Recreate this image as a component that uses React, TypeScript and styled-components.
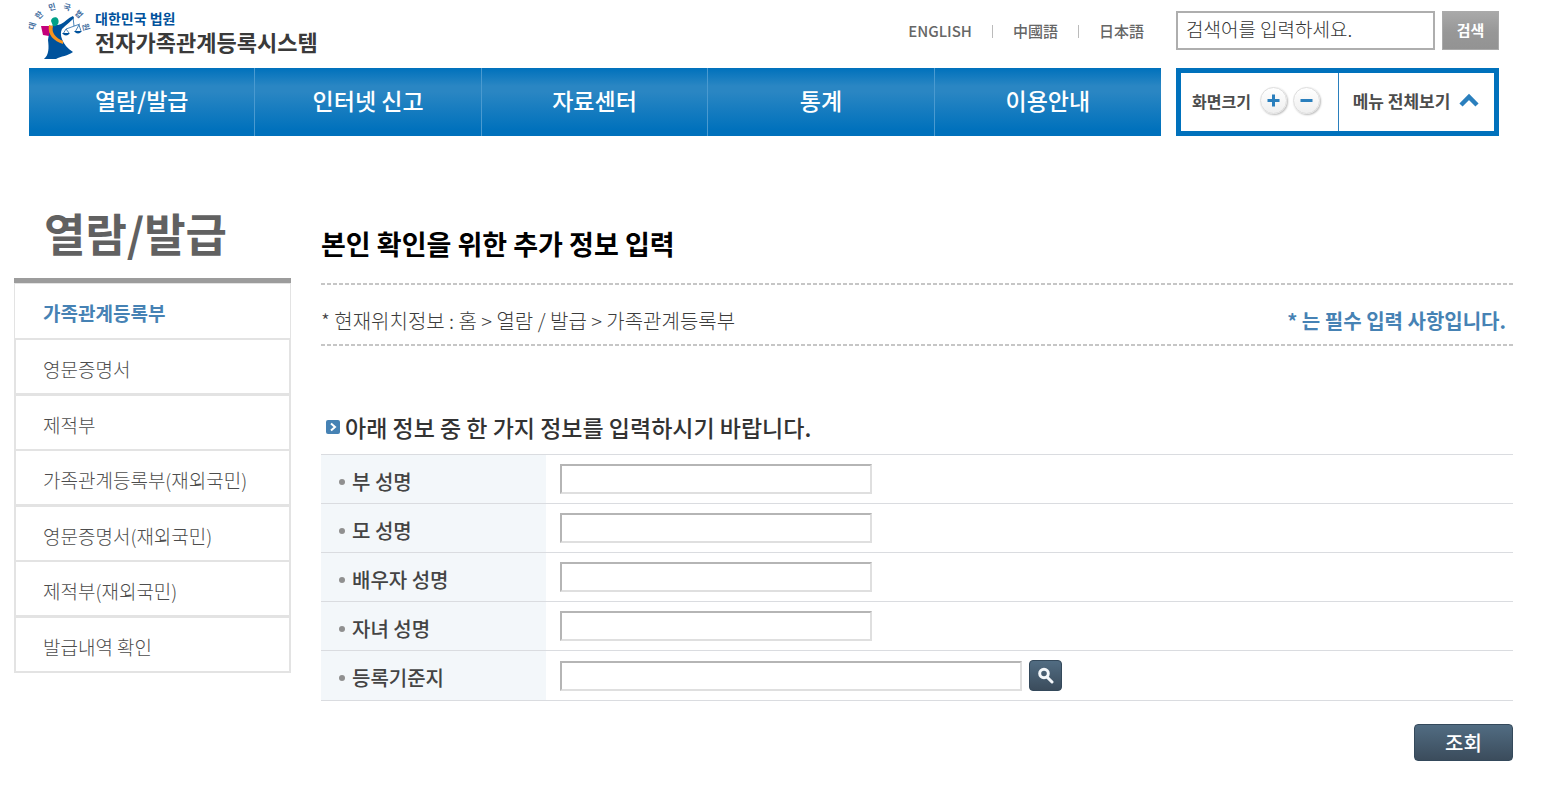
import React from 'react';
import styled, { createGlobalStyle } from 'styled-components';

const GlobalStyle = createGlobalStyle`
  *, *::before, *::after { box-sizing: border-box; }
  body {
    margin: 0;
    background: #fff;
    color: #444;
    font-family: "Noto Sans CJK KR", "Noto Sans", sans-serif;
  }
  h1, h2, h3, p, ul, ol { margin: 0; padding: 0; }
  ul, ol { list-style: none; }
  a { color: inherit; text-decoration: none; }
  button, input { font-family: inherit; margin: 0; }
  button { cursor: pointer; padding: 0; border: 0; }
`;

const Header = styled.header`
  padding: 0 42px 0 29px;
`;

const TopRow = styled.div`
  display: flex;
  align-items: flex-start;
  height: 68px;
`;

const Logo = styled.a`
  display: flex;
  gap: 3px;
  margin-left: -5px;
  margin-right: auto;
  white-space: nowrap;
`;

const LogoText = styled.span`
  display: flex;
  flex-direction: column;
  padding-top: 8px;
`;

const LogoSmall = styled.span`
  color: #00529c;
  font-size: 14px;
  font-weight: 700;
  line-height: 20px;
`;

const LogoName = styled.span`
  color: #3a3a3a;
  font-size: 22px;
  font-weight: 700;
  line-height: 26px;
`;

const Languages = styled.ul`
  display: flex;
  align-items: center;
  margin-right: 32px;
  padding-top: 21px;
  font-size: 15px;
  font-weight: 500;
  line-height: 20px;
  color: #666;

  li + li {
    display: flex;
    align-items: center;
  }
  li + li::before {
    content: "";
    width: 1px;
    height: 13px;
    margin: 0 20px;
    background: #bbb;
  }
`;

const SearchForm = styled.form`
  display: flex;
  gap: 7px;
  width: 323px;
  padding-top: 11px;
`;

const SearchInput = styled.input`
  flex: 1;
  min-width: 0;
  height: 39px;
  padding: 0 8px 4px;
  border: 2px solid #aeaeae;
  font-size: 19px;
  font-weight: 300;
  color: #333;
  &::placeholder { color: #333; opacity: 1; }
`;

const SearchButton = styled.button`
  width: 57px;
  height: 39px;
  padding-bottom: 3px;
  border: 1px solid #aaa;
  background: linear-gradient(#a9a9a9, #979797 55%, #939393);
  color: #fff;
  font-size: 15px;
  font-weight: 700;
`;

const NavRow = styled.div`
  display: flex;
  gap: 15px;
`;

const Nav = styled.nav`
  flex: 1;
  ul {
    display: grid;
    grid-template-columns: repeat(5, 1fr);
    background: linear-gradient(#0071bc 0, #2a86c3 18px, #2a86c3 24px, #0071bc 62px);
  }
  li { border-right: 1px solid #4a9ad0; }
  li:last-child { border-right: 0; }
  a {
    display: block;
    padding-bottom: 4px;
    line-height: 64px;
    text-align: center;
    color: #fff;
    font-size: 23px;
    font-weight: 500;
  }
`;

const Tools = styled.div`
  display: flex;
  width: 323px;
  border: 5px solid #0071bc;
  color: #4c4c4c;
  white-space: nowrap;
`;

const ScreenSize = styled.div`
  display: flex;
  align-items: center;
  width: 157px;
  padding: 0 0 3px 11px;
  box-shadow: 1px 0 0 #2a7fbd;
  font-size: 16px;
  font-weight: 700;
`;

const RoundButton = styled.button`
  width: 27px;
  height: 27px;
  border-radius: 50%;
  border: 1px solid #ddd;
  background: linear-gradient(#fff, #efefef);
  box-shadow: 1px 1px 2px #bbb;
  svg { display: block; margin: auto; }
  & + & { margin-left: 6px; }
`;

const SizeLabel = styled.span`
  flex: 1;
`;

const SizeButtons = styled.span`
  display: flex;
  padding-right: 18px;
`;

const AllMenu = styled.button`
  flex: 1;
  display: flex;
  align-items: center;
  justify-content: center;
  gap: 9px;
  padding-bottom: 4px;
  background: none;
  color: #4c4c4c;
  font-size: 17px;
  font-weight: 700;
`;

const Body = styled.div`
  display: flex;
  gap: 30px;
  padding: 64px 28px 24px 14px;
`;

const Side = styled.aside`
  flex: none;
  width: 277px;
`;

const SideTitle = styled.h2`
  height: 83px;
  padding-left: 30px;
  border-bottom: 5px solid #9c9c9c;
  color: #616161;
  font-size: 45px;
  font-weight: 700;
  line-height: 66px;
`;

const SideLink = styled.a<{ $current?: boolean }>`
  display: block;
  padding: 5px 0 0 27px;
  line-height: 48px;
  font-size: 19px;
  color: ${p => (p.$current ? '#4682b4' : '#4c4c4c')};
  font-weight: ${p => (p.$current ? 700 : 300)};
`;

const SideList = styled.ul`
  li {
    border: solid #e3e3e3;
    border-width: 2px 2px 0;
  }
  li:nth-child(odd) { border-top-width: 3px; }
  li:first-child {
    border-width: 1px 1px 0;
    padding: 0 1px 1px;
  }
  li:last-child { border-bottom-width: 2px; }
`;

const Main = styled.main`
  flex: 1;
  min-width: 0;
`;

const Title = styled.h1`
  height: 83px;
  padding-top: 26px;
  color: #000;
  font-size: 27px;
  font-weight: 700;
  line-height: 36px;
`;

const InfoBar = styled.div`
  background-image: repeating-linear-gradient(90deg, #c6c6c6 0 4px, transparent 4px 6px),
    repeating-linear-gradient(90deg, #c6c6c6 0 4px, transparent 4px 6px);
  background-repeat: no-repeat;
  background-size: 100% 2px;
  background-position: 0 0, 0 100%;
  display: flex;
  justify-content: space-between;
  height: 63px;
  padding: 24px 7px 0 0;
  font-size: 20px;
  line-height: 28px;
`;

const Crumbs = styled.p`
  color: #3c3c3c;
  font-weight: 300;
`;

const Required = styled.p`
  color: #4682b4;
  font-weight: 700;
`;

const SectionTitle = styled.h3`
  display: flex;
  align-items: center;
  gap: 5px;
  padding: 64px 0 10px 5px;
  color: #333;
  font-size: 23px;
  font-weight: 500;
  line-height: 34px;
  svg { flex: none; }
`;

const FormTable = styled.table`
  width: 100%;
  border-collapse: collapse;
  table-layout: fixed;
  tr { border-top: 1px solid #dadce0; }
  tr:last-child { border-bottom: 1px solid #dadce0; }
  tr:last-child td { height: 50px; }
  th {
    width: 225px;
    padding: 5px 0 0 18px;
    background: #f3f7fa;
    text-align: left;
    font-size: 20px;
    font-weight: 500;
    line-height: 28px;
    color: #444;
  }
  label { display: flex; align-items: center; gap: 7px; }
  label::before {
    content: "";
    width: 6px;
    height: 6px;
    border-radius: 50%;
    background: #909090;
  }
  td { height: 49px; padding: 0 14px; }
`;

const Field = styled.div`
  display: flex;
  align-items: center;
  gap: 7px;
`;

const TextInput = styled.input<{ $wide?: boolean }>`
  width: ${p => (p.$wide ? 462 : 312)}px;
  height: 30px;
  padding: 0 6px;
  border: 2px solid;
  border-color: #b5b5b5 #dfdfdf #dfdfdf #b5b5b5;
  font-size: 19px;
`;

const DarkButton = styled.button`
  background: linear-gradient(#516c82, #3b4c5c);
  border: 1px solid #34495b;
  border-radius: 4px;
  color: #fff;
  font-size: 20px;
  font-weight: 500;
`;

const FindButton = styled(DarkButton)`
  width: 33px;
  height: 31px;
  svg { display: block; margin: auto; }
`;

const SubmitButton = styled(DarkButton)`
  width: 99px;
  height: 37px;
  line-height: 32px;
`;

const Actions = styled.div`
  display: flex;
  justify-content: flex-end;
  padding-top: 23px;
`;

function Emblem() {
  const letters: [string, number, number, number][] = [
    ['대', 3, 26, -75], ['한', 10, 15, -45], ['민', 23, 7, -15],
    ['국', 38, 7, 15], ['법', 50, 14, 45], ['원', 57, 27, 75],
  ];
  return (
    <svg width="68" height="62" viewBox="-5 0 68 62" aria-hidden="true">
      <g fill="#456f9f" fontSize="8" fontWeight="700" textAnchor="middle">
        {letters.map(([c, x, y, r]) => (
          <text key={c} x={x} y={y + 3} transform={`rotate(${r} ${x} ${y})`}>{c}</text>
        ))}
      </g>
      <path d="M21 27 C24 24 28 26 32 24 C36 22 39 18 44 16 L45 18 C42 21 37 25 33 29 C30 34 33 45 44 52 C39 56 32 56 27 59 H15 C20 55 20 48 19 40 Z" fill="#00529c" />
      <path d="M22 21 C22 17 28 16 29 19 C31 23 28 27 24 26 Z" fill="#00a088" />
      <path d="M12 26 L21 26 L20 36 L14 35 Z" fill="#c4007a" />
      <path d="M20 25 C18 35 25 41 34 44 L34 41 C27 38 22 33 24 26 Z" fill="#f7931e" />
      <path d="M44 17 L45 26 M37 29 L51 24 M37 29 L34 34 M37 29 L40 33 M50 25 L46 32 M50 25 L52 31" fill="none" stroke="#00529c" strokeOpacity="0.7" />
      <path d="M33 33 H41 Q37 38 33 33 Z M45 31 H53 Q49 36 45 31 Z" fill="#00529c" />
    </svg>
  );
}

const navItems = ['열람/발급', '인터넷 신고', '자료센터', '통계', '이용안내'];
const sideItems = [
  '가족관계등록부', '영문증명서', '제적부', '가족관계등록부(재외국민)',
  '영문증명서(재외국민)', '제적부(재외국민)', '발급내역 확인',
];
const fields = [
  { id: 'father', label: '부 성명' },
  { id: 'mother', label: '모 성명' },
  { id: 'spouse', label: '배우자 성명' },
  { id: 'child', label: '자녀 성명' },
  { id: 'domicile', label: '등록기준지', find: true },
];

export default function App() {
  return (
    <>
      <GlobalStyle />
      <Header>
        <TopRow>
          <Logo href="#">
            <Emblem />
            <LogoText>
              <LogoSmall>대한민국 법원</LogoSmall>
              <LogoName>전자가족관계등록시스템</LogoName>
            </LogoText>
          </Logo>
          <Languages>
            <li><a href="#en">ENGLISH</a></li>
            <li><a href="#zh">中國語</a></li>
            <li><a href="#ja">日本語</a></li>
          </Languages>
          <SearchForm onSubmit={e => e.preventDefault()}>
            <SearchInput type="text" aria-label="검색어" placeholder="검색어를 입력하세요." />
            <SearchButton type="submit">검색</SearchButton>
          </SearchForm>
        </TopRow>
        <NavRow>
          <Nav>
            <ul>{navItems.map(t => <li key={t}><a href="#">{t}</a></li>)}</ul>
          </Nav>
          <Tools>
            <ScreenSize>
              <SizeLabel>화면크기</SizeLabel>
              <SizeButtons>
                <RoundButton type="button" aria-label="확대">
                  <svg width="13" height="13" viewBox="0 0 13 13"><path d="M6.5 0.5v12M0.5 6.5h12" stroke="#2a7fbd" strokeWidth="3" /></svg>
                </RoundButton>
                <RoundButton type="button" aria-label="축소">
                  <svg width="13" height="13" viewBox="0 0 13 13"><path d="M0.5 6.5h12" stroke="#2a7fbd" strokeWidth="3" /></svg>
                </RoundButton>
              </SizeButtons>
            </ScreenSize>
            <AllMenu type="button">
              메뉴 전체보기
              <svg width="20" height="14" viewBox="0 0 20 14"><path d="M2 12 L10 4 L18 12" fill="none" stroke="#2a7fbd" strokeWidth="4.5" /></svg>
            </AllMenu>
          </Tools>
        </NavRow>
      </Header>
      <Body>
        <Side>
          <SideTitle>열람/발급</SideTitle>
          <SideList>
            {sideItems.map((t, i) => (
              <li key={t}><SideLink href="#" $current={i === 0}>{t}</SideLink></li>
            ))}
          </SideList>
        </Side>
        <Main>
          <Title>본인 확인을 위한 추가 정보 입력</Title>
          <InfoBar>
            <Crumbs>* 현재위치정보 : 홈 &gt; 열람 / 발급 &gt; 가족관계등록부</Crumbs>
            <Required>* 는 필수 입력 사항입니다.</Required>
          </InfoBar>
          <form onSubmit={e => e.preventDefault()}>
            <SectionTitle>
              <svg width="14" height="14" viewBox="0 0 14 14" aria-hidden="true">
                <rect width="14" height="14" rx="2" fill="#4682b4" />
                <path d="M5 3.5 L9 7 L5 10.5" fill="none" stroke="#fff" strokeWidth="2" />
              </svg>
              아래 정보 중 한 가지 정보를 입력하시기 바랍니다.
            </SectionTitle>
            <FormTable>
              <tbody>
                {fields.map(f => (
                  <tr key={f.id}>
                    <th scope="row"><label htmlFor={f.id}>{f.label}</label></th>
                    <td>
                      <Field>
                        <TextInput id={f.id} type="text" $wide={f.find} />
                        {f.find && (
                          <FindButton type="button" aria-label="등록기준지 찾기">
                            <svg width="17" height="17" viewBox="0 0 17 17">
                              <circle cx="7" cy="6.5" r="4.3" fill="none" stroke="#f4f7fa" strokeWidth="3" />
                              <path d="M10 10 L15 15" stroke="#f4f7fa" strokeWidth="3" strokeLinecap="round" />
                            </svg>
                          </FindButton>
                        )}
                      </Field>
                    </td>
                  </tr>
                ))}
              </tbody>
            </FormTable>
            <Actions><SubmitButton type="submit">조회</SubmitButton></Actions>
          </form>
        </Main>
      </Body>
    </>
  );
}
